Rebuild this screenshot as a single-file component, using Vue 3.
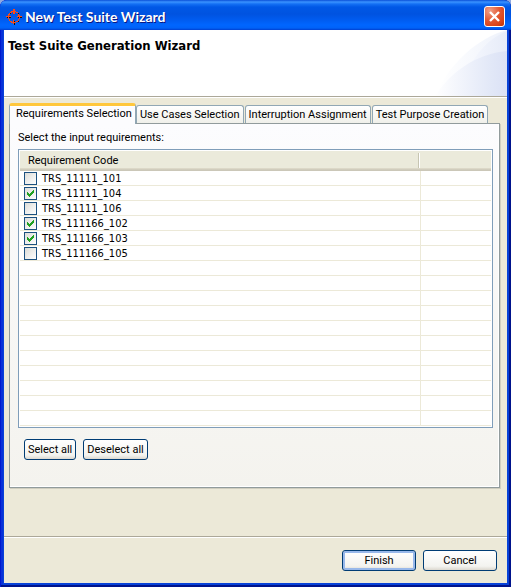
<script setup>
import { ref, computed } from 'vue'

const tabs = ['Requirements Selection', 'Use Cases Selection', 'Interruption Assignment', 'Test Purpose Creation']
const active = ref(0)
const rows = ref([
  { code: 'TRS_11111_101', checked: false },
  { code: 'TRS_11111_104', checked: true },
  { code: 'TRS_11111_106', checked: false },
  { code: 'TRS_111166_102', checked: true },
  { code: 'TRS_111166_103', checked: true },
  { code: 'TRS_111166_105', checked: false }
])
const visibleRows = 17
const fillers = computed(() => Math.max(0, visibleRows - rows.value.length))
const setAll = (value) => rows.value.forEach((row) => { row.checked = value })
</script>

<template>
  <div class="window">
    <header class="titlebar">
      <svg class="app-icon" viewBox="0 0 16 16" width="16" height="16" shape-rendering="crispEdges" aria-hidden="true">
        <path fill="#111" d="M8 1h1v4H8zM1 8h4v1H1zM12 8h4v1h-4zM8 12h1v4H8zM3 4h2v1H3zM12 4h1v2h-1zM4 12h2v1H4zM11 12h2v1h-2z" />
        <path fill="#ff4a12" d="M7 0h2v5H7zM7 11h1v4H7zM0 7h5v1H0zM11 7h5v1h-5zM5 2h5v1H5zM4 3h2v1H4zM10 3h2v1h-2zM3 4h1v2H3zM12 5h1v2h-1zM2 5h1v5H2zM13 6h1v4h-1zM3 10h1v2H3zM12 10h1v2h-1zM4 12h2v1H4zM10 12h2v1h-2zM5 13h5v1H5z" />
      </svg>
      <h1>New Test Suite Wizard</h1>
      <button class="close" type="button" aria-label="Close">
        <svg viewBox="0 0 19 19" width="19" height="19" aria-hidden="true">
          <path d="M5 5l9 9M14 5l-9 9" stroke="#fff" stroke-width="2.4" />
        </svg>
      </button>
    </header>

    <main class="client">
      <section class="banner">
        <h2>Test Suite Generation Wizard</h2>
        <svg class="swoosh" viewBox="0 0 76 66" width="76" height="66" aria-hidden="true">
          <defs>
            <linearGradient id="outer" gradientUnits="userSpaceOnUse" x1="8" x2="76" y1="0" y2="0">
              <stop offset="0" stop-color="#fff" />
              <stop offset="1" stop-color="#eef2fb" />
            </linearGradient>
            <linearGradient id="middle" gradientUnits="userSpaceOnUse" x1="30" x2="76" y1="0" y2="0">
              <stop offset="0" stop-color="#f8faff" />
              <stop offset="1" stop-color="#e6ebf8" />
            </linearGradient>
            <linearGradient id="inner" gradientUnits="userSpaceOnUse" x1="4" x2="76" y1="0" y2="0">
              <stop offset="0" stop-color="#fff" />
              <stop offset=".8" stop-color="#e1e7f7" />
              <stop offset="1" stop-color="#dbe1f5" />
            </linearGradient>
          </defs>
          <path fill="url(#outer)" d="M4 66C18 34 46 8 76 0V66z" />
          <path fill="url(#middle)" d="M36 42C45 22 60 7 76 1V42z" />
          <path fill="url(#inner)" d="M4 66C20 42 44 24 76 21V66z" />
        </svg>
      </section>

      <section class="content">
        <div class="tabs" role="tablist">
          <button
            v-for="(tab, i) in tabs"
            :key="tab"
            type="button"
            role="tab"
            class="tab"
            :class="{ active: i === active }"
            :aria-selected="i === active"
            @click="active = i"
          >{{ tab }}</button>
        </div>

        <div class="panel" role="tabpanel">
          <p id="list-label" class="caption">Select the input requirements:</p>
          <div class="list">
            <table aria-labelledby="list-label">
              <thead>
                <tr><th scope="col"><span>Requirement Code</span></th><th class="rest"></th></tr>
              </thead>
              <tbody>
                <tr v-for="row in rows" :key="row.code">
                  <td>
                    <label class="item">
                      <span class="box">
                        <input v-model="row.checked" type="checkbox" />
                        <svg v-if="row.checked" viewBox="0 0 13 13" width="13" height="13" shape-rendering="crispEdges" aria-hidden="true">
                          <path fill="#21a121" d="M3 5h1v3H3zM4 6h1v3H4zM5 7h1v3H5zM6 6h1v3H6zM7 5h1v3H7zM8 4h1v3H8zM9 3h1v3H9z" />
                        </svg>
                      </span>
                      <span>{{ row.code }}</span>
                    </label>
                  </td>
                  <td class="rest"></td>
                </tr>
                <tr v-for="n in fillers" :key="n"><td></td><td class="rest"></td></tr>
              </tbody>
            </table>
          </div>
          <div class="actions">
            <button type="button" class="btn" @click="setAll(true)">Select all</button>
            <button type="button" class="btn" @click="setAll(false)">Deselect all</button>
          </div>
        </div>
      </section>

      <footer class="footer">
        <button type="button" class="btn wide primary">Finish</button>
        <button type="button" class="btn wide">Cancel</button>
      </footer>
    </main>
  </div>
</template>

<style>
body {
  margin: 0;
  background: #8fa9e0;
}
</style>

<style scoped>
* {
  box-sizing: border-box;
}

.window {
  display: flex;
  flex-direction: column;
  min-height: 100vh;
  padding: 0 4px 4px;
  border-radius: 7px 7px 0 0;
  background: #0842d8;
  box-shadow: inset 1px 0 #0019cf, inset -2px 0 #00138c, inset 0 -2px #00138c, inset 3px 0 #0831d9;
  font: 11px/15px Roboto, "Noto Sans", sans-serif;
  color: #000;
}

button {
  font: inherit;
  color: inherit;
}

.titlebar {
  display: flex;
  align-items: center;
  height: 30px;
  margin: 0 -4px;
  padding: 3px 6px 0;
  border-radius: 7px 7px 0 0;
  background: linear-gradient(#0a50d8 0, #3a93ff 2px, #1470f4 4px, #0058e6 7px, #0053e0 14px, #005cf0 20px, #0066ff 25px, #0062f8 28px, #003fd0 30px);
}

.titlebar h1 {
  flex: 1;
  margin: 0 0 0 3px;
  font: bold 14px/18px Lato, "Noto Sans", sans-serif;
  color: #fff;
  text-shadow: 1px 1px #0a1883;
}

.close {
  display: grid;
  place-items: center;
  width: 21px;
  height: 21px;
  padding: 0;
  border: 1px solid #fff;
  border-radius: 3px;
  background: radial-gradient(circle at 25% 20%, #f0a088, #e35a35 45%, #dc4418 75%, #b83408);
}

.client {
  display: flex;
  flex: 1;
  flex-direction: column;
  background: #ece9d8;
}

.banner {
  display: flex;
  justify-content: space-between;
  height: 67px;
  border-bottom: 1px solid #aca899;
  background: #fff;
  box-shadow: 0 1px #fff;
}

.banner h2 {
  margin: 7px 0 0 4px;
  font: bold 13px/18px "DejaVu Sans Condensed", "Noto Sans", sans-serif;
}

.content {
  flex: 1;
  padding: 6px 7px 0 5px;
}

.tabs {
  display: flex;
  align-items: flex-end;
  gap: 1px;
  height: 20px;
}

.tab {
  height: 18px;
  padding: 0 3px;
  border: 1px solid #91a7b4;
  border-bottom: 0;
  border-radius: 3px 3px 0 0;
  background: linear-gradient(#fff, #f0f0ea);
  line-height: 17px;
  white-space: nowrap;
}

.tab.active {
  z-index: 1;
  height: 21px;
  margin: 0 -1px -1px 0;
  padding: 0 3px 3px 6px;
  border-top: 3px solid #ffc73c;
  box-shadow: inset 0 1px #fff;
  background: #fcfcfe;
  line-height: 15px;
}

.panel {
  padding: 6px 6px 27px 8px;
  border: 1px solid #919b9c;
  background: linear-gradient(#fcfcfe, #f4f3ee);
  box-shadow: 1px 1px #d0cebf, inset -1px -1px #fff;
}

.caption {
  margin: 0 0 4px;
}

.list {
  padding: 1px;
  border: 1px solid #7f9db9;
  background: #fff;
}

table {
  width: 100%;
  border-collapse: separate;
  border-spacing: 0;
  table-layout: fixed;
}

th {
  height: 20px;
  padding: 0 0 1px 8px;
  background: linear-gradient(#ebeadb 17px, #e2decd 17px, #d6d2c2 18px, #cbc7b8 19px);
  font-weight: normal;
  text-align: left;
}

th span {
  display: block;
  margin-right: 2px;
  border-right: 1px solid #c7c5b2;
  box-shadow: 1px 0 #fff;
}

td {
  height: 15px;
  padding: 0;
  border-right: 1px solid #ece9d8;
  border-bottom: 1px solid #ece9d8;
}

.rest {
  width: 70px;
  border-right: 0;
}

.item {
  display: flex;
  align-items: center;
  gap: 5px;
  height: 14px;
  padding-left: 4px;
  font-family: "DejaVu Sans Condensed", "Noto Sans", sans-serif;
}

.box {
  display: grid;
  width: 13px;
  height: 13px;
}

.box > * {
  grid-area: 1 / 1;
}

.box svg {
  pointer-events: none;
}

input {
  width: 13px;
  height: 13px;
  margin: 0;
  appearance: none;
  border: 1px solid #1c5180;
  background: linear-gradient(135deg, #dcdcd7, #fff);
}

.actions {
  display: flex;
  gap: 7px;
  padding: 11px 6px 0;
}

.btn {
  height: 21px;
  padding: 0 3px;
  border: 1px solid #003c74;
  border-radius: 3px;
  background: linear-gradient(#fff, #f3f3ef 80%, #dcd8cf);
  line-height: 19px;
  white-space: nowrap;
}

.wide {
  width: 74px;
}

.primary {
  box-shadow: inset 0 0 0 2px #98b8ea;
}

.footer {
  display: flex;
  justify-content: flex-end;
  gap: 7px;
  padding: 13px 10px 12px;
  border-top: 1px solid #aca899;
  box-shadow: inset 0 1px #fff;
}
</style>
